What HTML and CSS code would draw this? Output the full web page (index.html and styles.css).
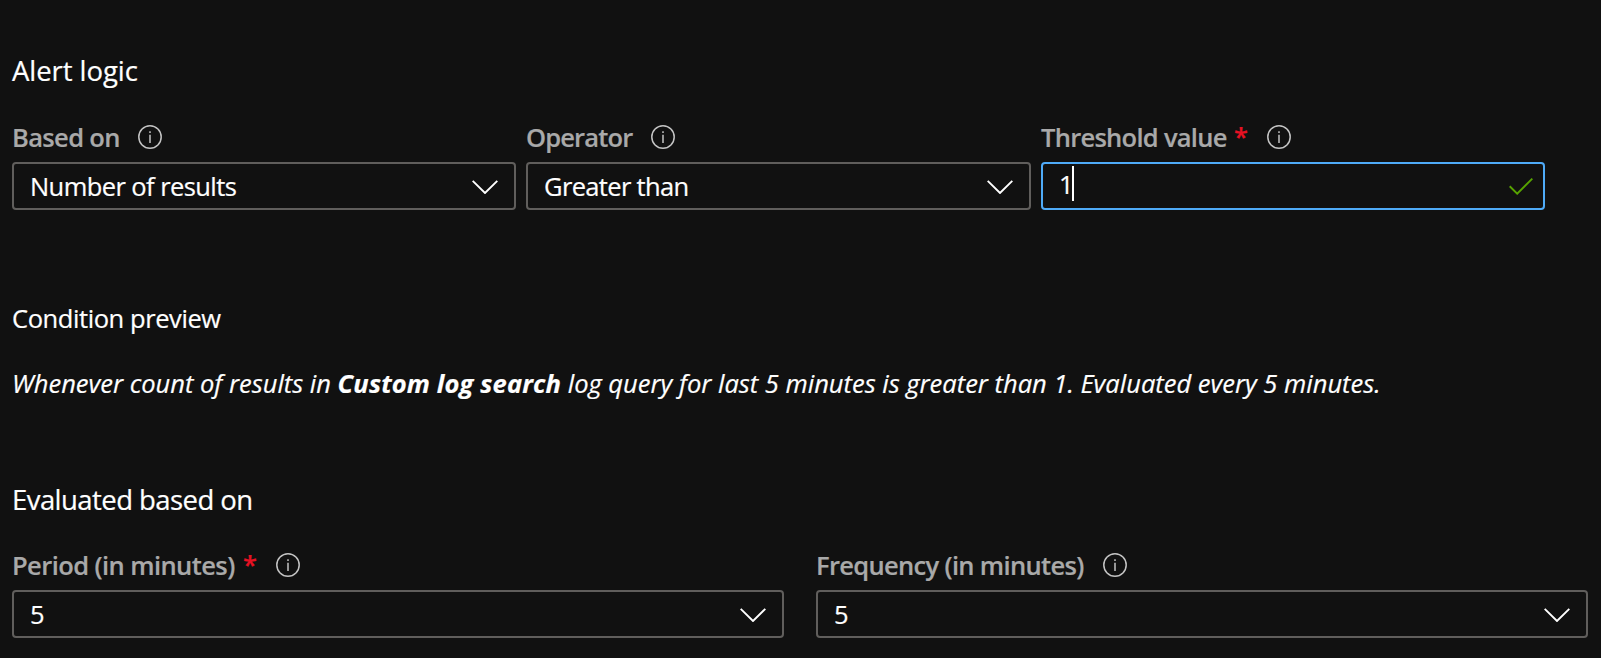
FILE: index.html
```html
<!DOCTYPE html>
<html lang="en">
<head>
<meta charset="utf-8">
<title>Alert logic</title>
<link rel="stylesheet" href="styles.css">
</head>
<body>
<svg class="defs" aria-hidden="true">
  <symbol id="info" viewBox="0 0 24 24"><circle cx="12" cy="12" r="11.2" fill="none" stroke="currentColor" stroke-width="1.5"/><path d="M12 9.8V18M12 6.3V8" fill="none" stroke="currentColor" stroke-width="1.5"/></symbol>
  <symbol id="chevron" viewBox="0 0 26 14"><path d="M.7.9 13 13 25.3.9" fill="none" stroke="currentColor" stroke-width="1.9"/></symbol>
  <symbol id="check" viewBox="0 0 24 17"><path d="M.7 8.3 8.2 15.7 23.3.7" fill="none" stroke="currentColor" stroke-width="1.9"/></symbol>
</svg>
<main class="panel">
  <h2 class="heading heading-logic">Alert logic</h2>
  <section class="row row-logic">
    <div class="field">
      <div class="label"><span class="t-based">Based on</span><svg class="info"><use href="#info"/></svg></div>
      <div class="box"><span class="t-number">Number of results</span><svg class="chevron"><use href="#chevron"/></svg></div>
    </div>
    <div class="field">
      <div class="label"><span class="t-operator">Operator</span><svg class="info"><use href="#info"/></svg></div>
      <div class="box"><span class="t-greater">Greater than</span><svg class="chevron"><use href="#chevron"/></svg></div>
    </div>
    <div class="field">
      <div class="label"><span class="t-threshold">Threshold value</span><span class="required">*</span><svg class="info"><use href="#info"/></svg></div>
      <div class="box focused"><span class="value">1<i class="caret"></i></span><svg class="check"><use href="#check"/></svg></div>
    </div>
  </section>
  <h3 class="subheading">Condition preview</h3>
  <p class="preview">Whenever count of results in <b>Custom log search</b> log query for last 5 minutes is greater than 1. Evaluated every 5 minutes.</p>
  <h2 class="heading heading-eval">Evaluated based on</h2>
  <section class="row row-eval">
    <div class="field">
      <div class="label"><span class="t-period">Period (in minutes)</span><span class="required">*</span><svg class="info"><use href="#info"/></svg></div>
      <div class="box"><span>5</span><svg class="chevron"><use href="#chevron"/></svg></div>
    </div>
    <div class="field">
      <div class="label"><span class="t-frequency">Frequency (in minutes)</span><svg class="info"><use href="#info"/></svg></div>
      <div class="box"><span>5</span><svg class="chevron"><use href="#chevron"/></svg></div>
    </div>
  </section>
</main>
</body>
</html>
```
FILE: styles.css
```css
* { box-sizing: border-box; }
body {
  margin: 0;
  background: #111;
  color: #fff;
  font: 25.5px/36px "Open Sans", "Noto Sans", sans-serif;
  -webkit-text-stroke: .2px currentColor;
}
.defs { display: block; width: 0; height: 0; }
.panel { height: 658px; padding: 53px 13px 0 12px; overflow: hidden; white-space: nowrap; }
.heading, .subheading, .preview { margin: 0; font-weight: 400; }
.heading { font-size: 27.5px; }
.heading-logic { letter-spacing: -.06px; }
.heading-eval { margin-top: 81px; letter-spacing: -.56px; }
.subheading { margin-top: 90px; font-size: 25.5px; letter-spacing: -.42px; }
.preview { margin-top: 29px; font-style: italic; }
.preview b { letter-spacing: .15px; }

.row { display: grid; }
.row-logic { grid-template-columns: 504px 505px 504px; column-gap: 10px; margin-top: 30px; }
.row-eval { grid-template-columns: repeat(2, 772px); column-gap: 32px; margin-top: 29px; }
.label { display: flex; align-items: center; height: 36px; margin-bottom: 7px; color: #a9a9a9; font-weight: 600; }
.info { width: 24px; height: 24px; margin-left: 19px; color: #c4c4c4; }
.row-eval .info { margin-bottom: 1px; }
.required { width: 13px; margin: 0 0 2px 8px; color: #e81123; }
.required + .info { margin-left: 20px; }
.box {
  display: flex;
  align-items: center;
  justify-content: space-between;
  height: 48px;
  padding: 0 16px;
  border: 2px solid #605e5c;
  border-radius: 4px;
}
.chevron { width: 26px; height: 14px; margin-top: 2px; }
.focused { padding: 0 10px 0 16px; border-color: #4fabf8; }
.value { display: flex; align-items: center; margin-bottom: 4px; }
.caret { width: 2px; height: 35px; margin: 0 0 1px -2px; background: #fff; }
.check { width: 24px; height: 17px; color: #57a300; }

.t-based { width: 107px; letter-spacing: -.64px; }
.t-operator { width: 106px; letter-spacing: -.84px; }
.t-threshold { width: 185px; letter-spacing: -.72px; }
.t-period { width: 223px; letter-spacing: -.58px; }
.t-frequency { width: 268px; letter-spacing: -.67px; }
.t-number { letter-spacing: -.58px; }
.t-greater { letter-spacing: -.66px; }
```
